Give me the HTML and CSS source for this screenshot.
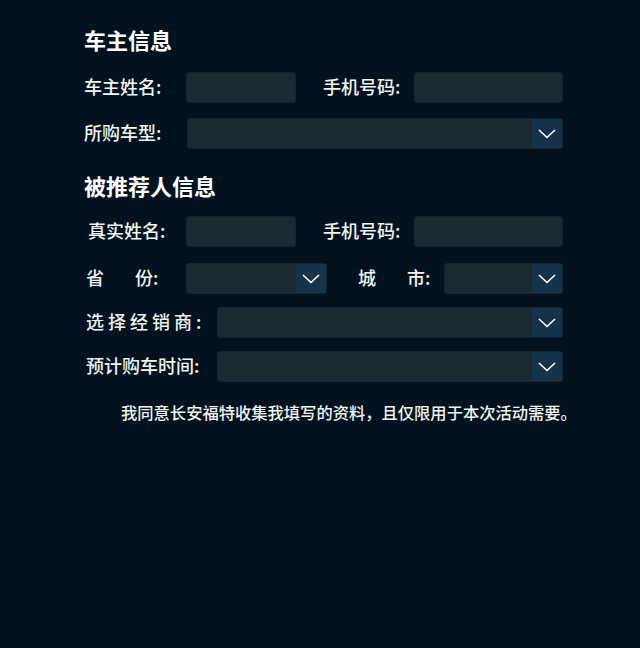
FILE: index.html
```html
<!DOCTYPE html>
<html lang="zh-CN">
<head>
<meta charset="utf-8">
<title>表单</title>
<link rel="stylesheet" href="styles.css">
</head>
<body>
<div class="page">
  <h2 class="title">车主信息</h2>
  <div class="row r1">
    <span class="lbl lbl-a">车主姓名:</span>
    <div class="field w-short"></div>
    <span class="lbl lbl-phone">手机号码:</span>
    <div class="field w-phone"></div>
  </div>
  <div class="row r2">
    <span class="lbl lbl-b">所购车型:</span>
    <div class="select w-model"><div class="arrow"><svg viewBox="0 0 18 10" width="18" height="10"><path d="M1 1 L9 8.5 L17 1" fill="none" stroke="#fff" stroke-width="1.6"/></svg></div></div>
  </div>

  <h2 class="title t2">被推荐人信息</h2>
  <div class="row r3">
    <span class="lbl lbl-c">真实姓名:</span>
    <div class="field w-short"></div>
    <span class="lbl lbl-phone2">手机号码:</span>
    <div class="field w-phone"></div>
  </div>
  <div class="row r4">
    <span class="lbl lbl-d"><span class="gap">省</span>份:</span>
    <div class="select w-prov"><div class="arrow"><svg viewBox="0 0 18 10" width="18" height="10"><path d="M1 1 L9 8.5 L17 1" fill="none" stroke="#fff" stroke-width="1.6"/></svg></div></div>
    <span class="lbl lbl-city"><span class="gap">城</span>市:</span>
    <div class="select w-city"><div class="arrow"><svg viewBox="0 0 18 10" width="18" height="10"><path d="M1 1 L9 8.5 L17 1" fill="none" stroke="#fff" stroke-width="1.6"/></svg></div></div>
  </div>
  <div class="row r5">
    <span class="lbl lbl-e spaced">选择经销商:</span>
    <div class="select w-long"><div class="arrow"><svg viewBox="0 0 18 10" width="18" height="10"><path d="M1 1 L9 8.5 L17 1" fill="none" stroke="#fff" stroke-width="1.6"/></svg></div></div>
  </div>
  <div class="row r6">
    <span class="lbl lbl-e">预计购车时间:</span>
    <div class="select w-long"><div class="arrow"><svg viewBox="0 0 18 10" width="18" height="10"><path d="M1 1 L9 8.5 L17 1" fill="none" stroke="#fff" stroke-width="1.6"/></svg></div></div>
  </div>
  <p class="consent">我同意长安福特收集我填写的资料，且仅限用于本次活动需要。</p>
</div>
</body>
</html>
```

FILE: styles.css
```css
html, body {
  margin: 0;
  padding: 0;
  background: #02121f;
}
body {
  width: 640px;
  height: 648px;
  font-family: "Noto Sans CJK SC", "Noto Sans", sans-serif;
  color: #f2f3f4;
}
.page {
  padding: 27px 0 0 84px;
  width: 490px;
}
.title {
  margin: 0;
  font-size: 22px;
  line-height: 25px;
  font-weight: bold;
  color: #ffffff;
}
.t2 {
  margin-top: 24px;
}
.row {
  display: flex;
  align-items: center;
  height: 31px;
}
.r1 { margin-top: 20px; }
.r2 { margin-top: 15px; }
.r3 { margin-top: 18px; }
.r4 { margin-top: 16px; }
.r5 { margin-top: 13px; }
.r6 { margin-top: 13px; }

.lbl {
  font-size: 18px;
  line-height: 20px;
  font-weight: 500;
  padding-bottom: 3px;
  white-space: nowrap;
  color: #f2f3f4;
  flex: none;
}
.lbl-a { width: 102px; }
.lbl-b { width: 103px; }
.lbl-c { width: 98px; padding-left: 4px; }
.lbl-d { width: 100px; padding-left: 2px; }
.lbl-e { width: 131px; padding-left: 2px; }
.lbl-phone { margin-left: 27px; width: 91px; }
.lbl-phone2 { margin-left: 27px; width: 91px; }
.lbl-city { margin-left: 31px; width: 86px; }
.gap { margin-right: 31px; }
.spaced { letter-spacing: 4px; }

.field,
.select {
  box-sizing: border-box;
  height: 31px;
  background: #1b2933;
  border: 1px solid #13232f;
  border-radius: 3px;
  flex: none;
}
.select {
  display: flex;
  justify-content: flex-end;
  overflow: hidden;
}
.arrow {
  width: 30px;
  height: 100%;
  background: #163349;
  display: flex;
  align-items: center;
  justify-content: center;
}
.arrow svg { display: block; margin-top: 1px; }

.w-short { width: 110px; }
.w-phone { width: 149px; }
.w-model { width: 376px; }
.w-prov { width: 141px; }
.w-city { width: 119px; }
.w-long { width: 346px; }

.consent {
  margin: 20px 0 0 37px;
  font-size: 16.3px;
  line-height: 20px;
  font-weight: 500;
  white-space: nowrap;
  color: #f2f3f4;
}
```
